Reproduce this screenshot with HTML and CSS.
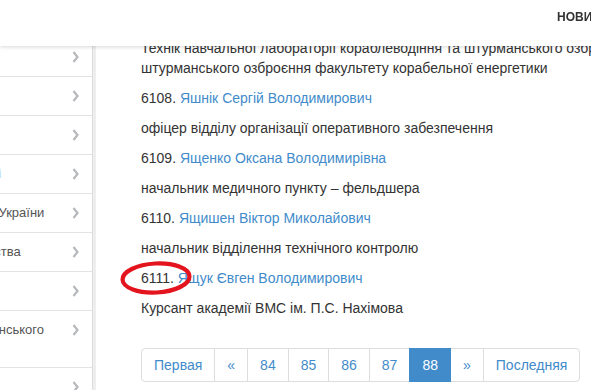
FILE: index.html
```html
<!DOCTYPE html>
<html lang="uk">
<head>
<meta charset="utf-8">
<title>Особовий склад</title>
<link rel="stylesheet" href="styles.css">
</head>
<body>
<header class="topbar">
  <div class="brand-space"></div>
  <nav class="topnav">
    <a href="#" class="topnav-link">Новини</a>
    <a href="#" class="topnav-link">Контакти</a>
  </nav>
</header>
<div class="layout">
  <aside class="sidebar">
    <ul class="menu">
      <li class="menu-item"><span class="menu-label">Про академію</span><svg class="chev" viewBox="0 0 8 18"><polyline points="2.5,4 6.5,9 2.5,14"/></svg></li>
      <li class="menu-item"><span class="menu-label">Історія</span><svg class="chev" viewBox="0 0 8 18"><polyline points="2.5,4 6.5,9 2.5,14"/></svg></li>
      <li class="menu-item"><span class="menu-label">Керівництво</span><svg class="chev" viewBox="0 0 8 18"><polyline points="2.5,4 6.5,9 2.5,14"/></svg></li>
      <li class="menu-item"><span class="menu-label">Військові частини у Керчі</span><svg class="chev" viewBox="0 0 8 18"><polyline points="2.5,4 6.5,9 2.5,14"/></svg></li>
      <li class="menu-item"><span class="menu-label">Військово-Морські Сили України</span><svg class="chev" viewBox="0 0 8 18"><polyline points="2.5,4 6.5,9 2.5,14"/></svg></li>
      <li class="menu-item"><span class="menu-label">Частини тилу і господарства</span><svg class="chev" viewBox="0 0 8 18"><polyline points="2.5,4 6.5,9 2.5,14"/></svg></li>
      <li class="menu-item"><span class="menu-label">Вступникам</span><svg class="chev" viewBox="0 0 8 18"><polyline points="2.5,4 6.5,9 2.5,14"/></svg></li>
      <li class="menu-item"><span class="menu-label">Навчальний пункт Херсонського<br>гарнізону</span><svg class="chev" viewBox="0 0 8 18"><polyline points="2.5,4 6.5,9 2.5,14"/></svg></li>
      <li class="menu-item"><span class="menu-label">Контакти</span><svg class="chev" viewBox="0 0 8 18"><polyline points="2.5,4 6.5,9 2.5,14"/></svg></li>
    </ul>
  </aside>
  <main class="content">
    <p>Технік навчальної лабораторії кораблеводіння та штурманського озброєння кафедри кораблеводіння та штурманського озброєння факультету корабельної енергетики</p>
    <p>6108. <a href="#">Яшнік Сергій Володимирович</a></p>
    <p>офіцер відділу організації оперативного забезпечення</p>
    <p>6109. <a href="#">Ященко Оксана Володимирівна</a></p>
    <p>начальник медичного пункту – фельдшера</p>
    <p>6110. <a href="#">Ящишен Віктор Миколайович</a></p>
    <p>начальник відділення технічного контролю</p>
    <p class="marked">6111. <a href="#">Ящук Євген Володимирович</a><svg class="mark-ring" width="72" height="34"><ellipse cx="36" cy="17" rx="33.5" ry="14.5" transform="rotate(-3 36 17)"/></svg></p>
    <p>Курсант академії ВМС ім. П.С. Нахімова</p>
    <ul class="pagination">
      <li><a href="#" class="page-link first">Первая</a></li>
      <li><a href="#" class="page-link">«</a></li>
      <li><a href="#" class="page-link">84</a></li>
      <li><a href="#" class="page-link">85</a></li>
      <li><a href="#" class="page-link">86</a></li>
      <li><a href="#" class="page-link">87</a></li>
      <li><a href="#" class="page-link active">88</a></li>
      <li><a href="#" class="page-link">»</a></li>
      <li><a href="#" class="page-link last">Последняя</a></li>
    </ul>
  </main>
</div>
</body>
</html>
```

FILE: styles.css
```css
* { box-sizing: border-box; }
html, body { margin: 0; padding: 0; overflow: hidden; }
body {
  font-family: "Liberation Sans", Arial, sans-serif;
  font-size: 14px;
  line-height: 20px;
  color: #333;
  background: #fff;
}
a { color: #428bca; text-decoration: none; }

.topbar {
  position: fixed;
  top: 0; left: 0; right: 0;
  height: 46px;
  background: #fff;
  box-shadow: 0 1px 4px rgba(0,0,0,0.16);
  display: flex;
  z-index: 10;
}
.brand-space { flex: 0 0 557px; }
.topnav { display: flex; white-space: nowrap; }
.topnav-link {
  padding: 7px 15px 0 0;
  font-size: 12px;
  font-weight: bold;
  text-transform: uppercase;
  color: #333;
  line-height: 20px;
}

.layout { display: flex; align-items: flex-start; padding-top: 38px; }

.sidebar {
  flex: 0 0 93px;
  width: 93px;
  overflow: hidden;
  border-right: 1px solid #ddd;
  box-shadow: 3px 0 0 #eeeeee;
}
.menu {
  list-style: none;
  margin: 0 0 0 -151px;
  padding: 0;
  width: 243px;
}
.menu-item {
  display: flex;
  align-items: flex-start;
  padding: 10px 13px 10px 0;
  border-bottom: 1px solid #e3e3e3;
  font-size: 13px;
  line-height: 18px;
  color: #555;
}
.menu-label { flex: 1; white-space: nowrap; }
.chev {
  flex: none;
  width: 8px;
  height: 18px;
  fill: none;
  stroke: #b6b8bb;
  stroke-width: 2.2;
}

.content {
  flex: none;
  width: 780px;
  padding-left: 48px;
}
.content p { margin: 0 0 10px; }
.marked { position: relative; }
.mark-ring {
  position: absolute;
  left: -21px;
  top: -7px;
  width: 72px;
  height: 34px;
  overflow: visible;
  fill: none;
  stroke: #e3141d;
  stroke-width: 4.2;
}

.pagination {
  display: flex;
  list-style: none;
  padding: 0;
  margin: 30px 0 20px;
}
.page-link {
  display: block;
  padding: 6px 12px;
  margin-left: -1px;
  border: 1px solid #ddd;
  background: #fff;
  color: #428bca;
  line-height: 20px;
}
.page-link.first { margin-left: 0; border-radius: 4px 0 0 4px; }
.page-link.last { border-radius: 0 4px 4px 0; }
.page-link.active {
  position: relative;
  z-index: 2;
  background: #428bca;
  border-color: #428bca;
  color: #fff;
}
```
